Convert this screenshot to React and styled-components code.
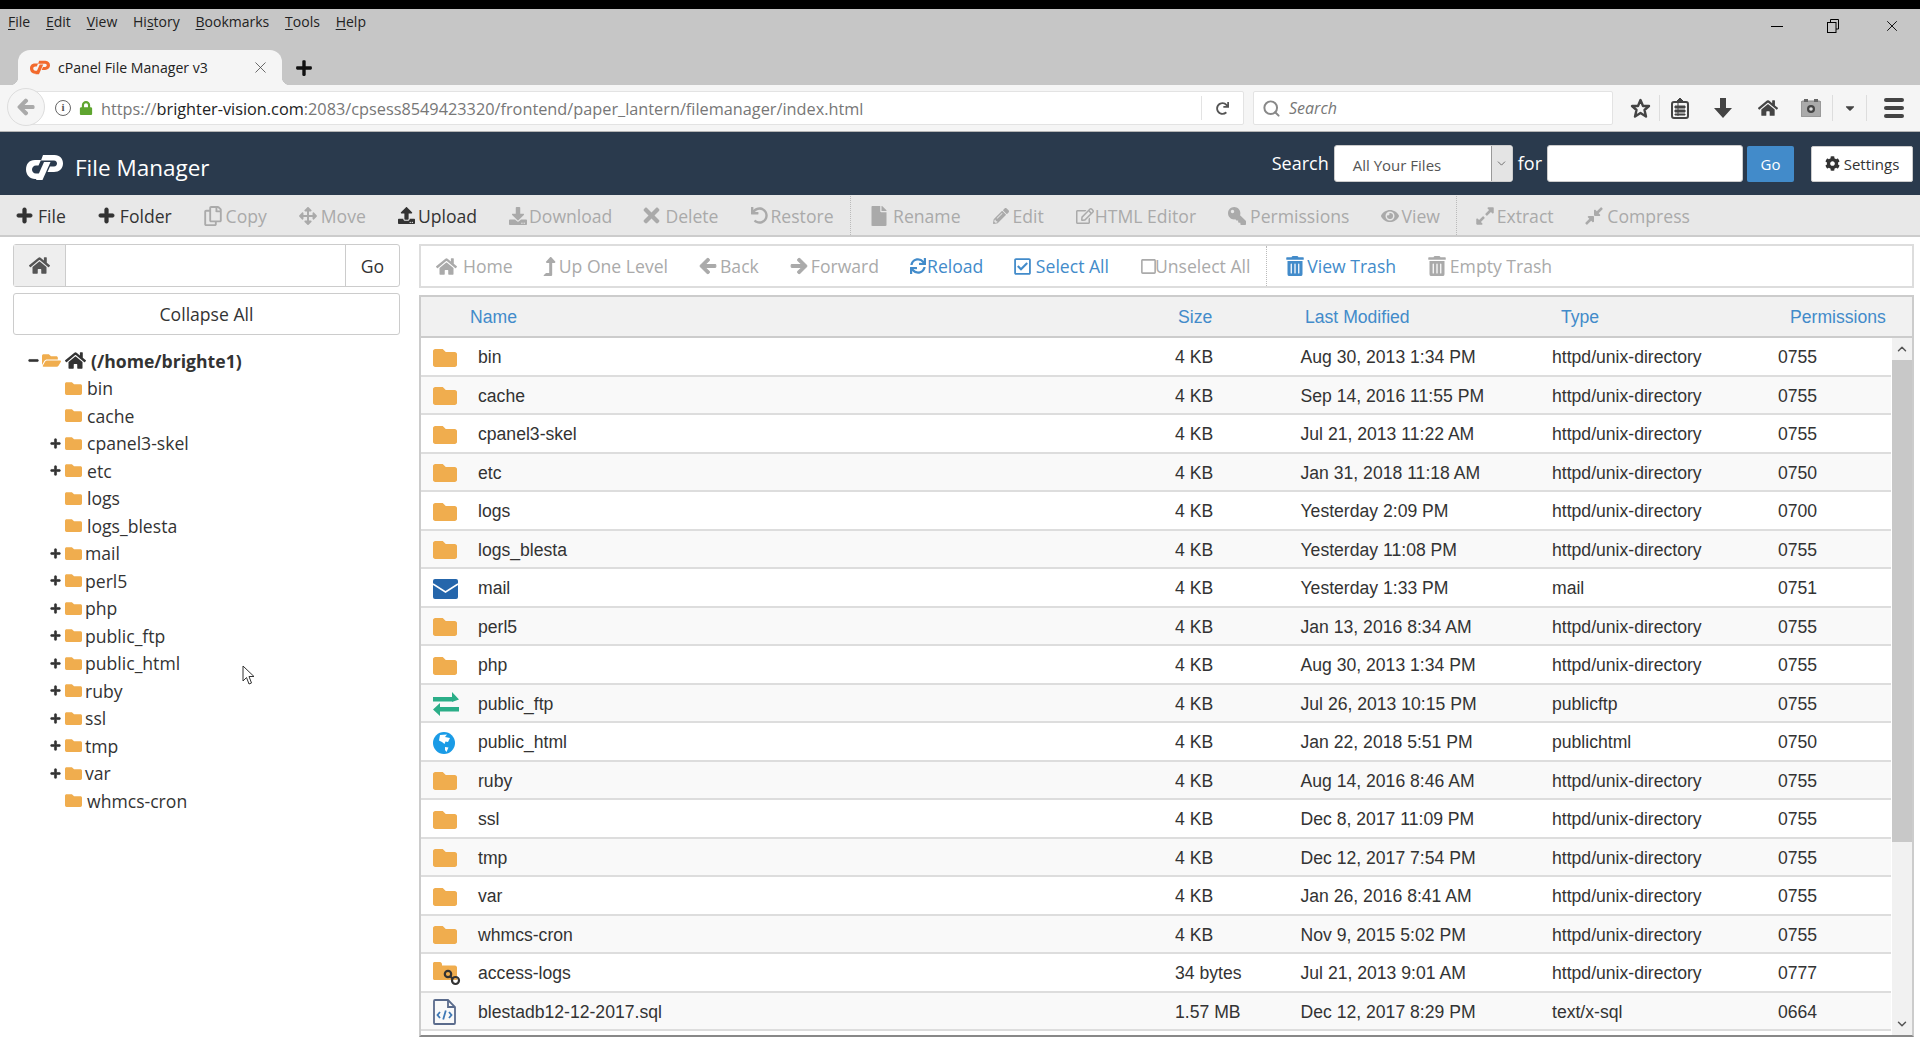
import styled, { createGlobalStyle } from "styled-components";
import {
  FaPlus, FaRegCopy, FaArrowsAlt, FaUpload, FaDownload, FaTimes, FaUndo, FaFile, FaPencilAlt,
  FaRegEdit, FaKey, FaEye, FaExpandAlt, FaCompressAlt, FaHome, FaLevelUpAlt, FaArrowLeft,
  FaArrowRight, FaSync, FaRegCheckSquare, FaRegSquare, FaTrashAlt, FaCog, FaFolder, FaFolderOpen,
  FaMinus, FaLock, FaRedo, FaCaretDown,
} from "react-icons/fa";
import { Search as SearchIcon, ChevronDown, ChevronUp, X } from "lucide-react";

const Global = createGlobalStyle`
html,body{margin:0;padding:0;background:#fff;}
#root{height:1039px;overflow:hidden;}
*{box-sizing:border-box;}
`;

const Page = styled.div`
position:relative;
width:1920px;
height:1039px;
display:flex;
flex-direction:column;
font-family:"Open Sans",sans-serif;
color:#333;
background:#fff;
overflow:hidden;
border-top:9px solid #000;
`;

/* browser chrome */
const MenuStrip = styled.div`
height:76px;
background:#c6c6c6;
position:relative;
flex:none;
`;
const MenuBar = styled.div`
display:flex;
gap:15.800px;
padding:3px 0 0 8px;
font-size:14px;
line-height:20px;
color:#222;
u{text-underline-offset:2px;}
`;
const WinButtons = styled.div`
position:absolute;
top:5px;
right:19px;
display:flex;
align-items:center;
gap:44px;
height:24px;
`;
const MinBtn = styled.span`
width:12px;
height:1px;
background:#000;
`;
const TabRow = styled.div`
display:flex;
align-items:center;
position:absolute;
left:18px;
bottom:0;
`;
const Tab = styled.div`
position:relative;
width:264px;
height:35px;
background:#f5f5f5;
border-radius:12px 12px 0 0;
display:flex;
align-items:center;
padding:0 12px 0 12px;
font-size:14.100px;
color:#222;
&::before,&::after{
    content:"";
    position:absolute;
    bottom:0;
    width:8px;
    height:8px;
}
&::before{
    left:-8px;
    background:radial-gradient(circle at 0 0,transparent 8px,#f5f5f5 8.500px);
}
&::after{
    right:-8px;
    background:radial-gradient(circle at 100% 0,transparent 8px,#f5f5f5 8.500px);
}
`;
const TabTitle = styled.span`
margin-left:8px;
flex:1;
`;
const NewTab = styled.span`
margin-left:13px;
display:flex;
color:#111;
`;
const NavBar = styled.div`
height:47px;
flex:none;
background:#f5f5f5;
border-bottom:1px solid #b5b5b5;
display:flex;
align-items:center;
position:relative;
padding-left:30px;
`;
const BackCircle = styled.div`
position:absolute;
left:7px;
top:3px;
width:38px;
height:38px;
border-radius:50%;
background:#f5f5f5;
border:1px solid #ddd;
color:#aaa;
display:flex;
align-items:center;
justify-content:center;
z-index:1;
`;
const UrlBox = styled.div`
width:1214px;
height:34px;
background:#fff;
border:1px solid #e3e3e3;
border-radius:2px;
display:flex;
align-items:center;
padding-left:24px;
font-size:16.300px;
color:#777;
white-space:nowrap;
b{font-weight:400;color:#222;}
`;
const InfoMark = styled.span`
width:16px;
height:16px;
border:1.500px solid #666;
border-radius:50%;
font-size:11px;
line-height:13px;
font-family:"Liberation Serif",serif;
font-weight:700;
text-align:center;
color:#555;
flex:none;
`;
const LockMark = styled.span`
margin:0 8px 0 8px;
color:#5ea52f;
display:flex;
`;
const UrlText = styled.span`
flex:1;
position:relative;
top:1px;
`;
const UrlEnd = styled.span`
width:42px;
height:24px;
border-left:1px solid #e3e3e3;
color:#555;
display:flex;
align-items:center;
justify-content:center;
`;
const SearchBox = styled.div`
margin-left:9px;
width:360px;
height:34px;
background:#fff;
border:1px solid #e3e3e3;
border-radius:2px;
display:flex;
align-items:center;
gap:8px;
padding-left:8px;
font-size:16px;
font-style:italic;
color:#777;
`;
const NavIcons = styled.div`
display:flex;
align-items:center;
margin-left:8px;
color:#444;
height:30px;
`;
const NavIcon = styled.span`
display:flex;
align-items:center;
justify-content:center;
width:${(p) => p.$w || 44}px;
`;
const NavSep = styled.span`
width:1px;
height:26px;
background:#ddd;
`;
const Burger = styled.span`
display:flex;
flex-direction:column;
gap:4px;
margin-left:17px;
span{
    display:block;
    width:20px;
    height:4px;
    border-radius:2px;
    background:#444;
}
`;

/* cpanel header */
const Header = styled.div`
height:63px;
flex:none;
background:#2a3a4d;
display:flex;
align-items:center;
padding:0 7px 0 26px;
color:#fff;
`;
const Brand = styled.div`
flex:1;
display:flex;
align-items:center;
padding-top:8px;
`;
const Title = styled.span`
margin-left:12px;
font-size:22.500px;
`;
const HeadLabel = styled.span`
font-size:18px;
margin:0 5px;
position:relative;
top:-1px;
`;
const SelectBox = styled.div`
width:179px;
height:37px;
background:#fff;
border:1px solid #ccc;
border-radius:3px;
display:flex;
align-items:center;
justify-content:space-between;
padding-left:18px;
font-size:15px;
color:#555;
overflow:hidden;
`;
const SelectText = styled.span`
padding-top:2px;
`;
const SelectArrow = styled.span`
width:21px;
height:100%;
background:#e4e4e4;
border-left:1px solid #999;
color:#555;
display:flex;
align-items:center;
justify-content:center;
`;
const HeadInput = styled.div`
width:196px;
height:37px;
background:#fff;
border:1px solid #ccc;
border-radius:3px;
`;
const GoBtn = styled.div`
margin-left:4px;
width:47px;
height:36px;
background:#428bca;
border-radius:2px;
font-size:15px;
display:flex;
align-items:center;
justify-content:center;
`;
const SettingsBtn = styled.div`
margin-left:17px;
width:102px;
height:36px;
background:#fff;
border:1px solid #ccc;
border-radius:2px;
color:#333;
font-size:15px;
display:flex;
align-items:center;
justify-content:center;
gap:4px;
`;

/* toolbars */
const Actions = styled.div`
height:42px;
flex:none;
background:#e8e8e8;
border-bottom:2px solid #ccc;
display:flex;
align-items:center;
gap:32px;
padding:1px 0 0 16px;
font-size:17.600px;
`;
const Tool = styled.span`
display:flex;
align-items:center;
gap:${(p) => p.$gap ?? 4}px;
white-space:nowrap;
color:${(p) => (p.$tone === "on" ? "#333" : p.$tone === "blue" ? "#428bca" : "#aaa")};
`;
const Glyph = styled.span`
display:flex;
margin:0 ${(p) => -(p.$tail || 0)}px 0 ${(p) => -(p.$trim || 0)}px;
`;
const MirrorKey = styled(FaKey)`
transform:scaleX(-1);
`;
const Divider = styled.span`
width:1px;
align-self:stretch;
margin:0 ${(p) => p.$after}px 0 -16px;
border-left:1px dotted #bbb;
`;

const Main = styled.div`
flex:1;
display:flex;
gap:19px;
padding:7px 6px 0 13px;
min-height:0;
`;

/* left column */
const Side = styled.div`
width:387px;
flex:none;
display:flex;
flex-direction:column;
gap:6px;
`;
const PathGroup = styled.div`
height:43px;
display:flex;
border:1px solid #ccc;
border-radius:3px;
font-size:17.600px;
`;
const PathHome = styled.span`
width:52px;
background:#eee;
border-right:1px solid #ccc;
color:#555;
display:flex;
align-items:center;
justify-content:center;
`;
const PathInput = styled.span`
flex:1;
`;
const PathGo = styled.span`
width:54px;
border-left:1px solid #ccc;
display:flex;
align-items:center;
justify-content:center;
`;
const Collapse = styled.div`
height:42px;
border:1px solid #ccc;
border-radius:3px;
font-size:17.600px;
display:flex;
align-items:center;
justify-content:center;
`;
const Tree = styled.div`
padding-top:6px;
font-size:17.600px;
`;
const TreeRow = styled.div`
height:27.500px;
display:flex;
align-items:center;
position:relative;
padding-left:${(p) => (p.$root ? 15 : 52)}px;
font-weight:${(p) => (p.$root ? 700 : 400)};
`;
const Toggle = styled.span`
position:absolute;
left:37px;
display:flex;
color:#333;
`;
const MinusMark = styled.span`
display:flex;
margin-right:3px;
`;
const TreeFolder = styled.span`
display:flex;
color:#f0ad4e;
margin-right:${(p) => (p.$tight ? 3 : 5)}px;
`;
const TreeHome = styled.span`
display:flex;
margin:0 5px 0 1px;
color:#333;
`;

/* table */
const Content = styled.div`
flex:1;
display:flex;
flex-direction:column;
gap:7px;
min-width:0;
`;
const NavTools = styled.div`
height:44px;
flex:none;
border:2px solid #ddd;
display:flex;
align-items:center;
gap:32px;
padding-left:15px;
font-size:17.600px;
`;
const Table = styled.div`
height:742px;
flex:none;
border:2px solid #ccc;
border-bottom-color:#888;
display:flex;
flex-direction:column;
font-family:"Liberation Sans",Arial,sans-serif;
font-size:17.600px;
`;
const HeadRow = styled.div`
height:41px;
flex:none;
background:#f1f1f1;
border-bottom:2px solid #ccc;
display:grid;
grid-template-columns:708px 127px 256px 229px 1fr;
align-items:center;
padding:2px 0 0 49px;
color:#428bca;
`;
const Body = styled.div`
flex:1;
display:flex;
min-height:0;
`;
const Rows = styled.div`
flex:1;
`;
const Row = styled.div`
height:38.500px;
display:grid;
grid-template-columns:57px 697px 125.500px 251.500px 226px 1fr;
align-items:center;
padding-top:3px;
background:${(p) => (p.$odd ? "#f9f9f9" : "#fff")};
border-bottom:2px solid #ddd;
`;
const Cell = styled.span`
white-space:nowrap;
`;
const IconCell = styled.span`
display:flex;
align-items:center;
padding-left:12px;
color:#f0ad4e;
`;
const Scrollbar = styled.div`
width:20px;
margin-left:1px;
flex:none;
background:#f1f1f1;
display:flex;
flex-direction:column;
align-items:center;
justify-content:space-between;
color:#555;
`;
const ScrollEnd = styled.span`
height:22px;
display:flex;
align-items:center;
justify-content:center;
`;
const Thumb = styled.span`
width:100%;
height:482px;
background:#c8c8c8;
margin-bottom:auto;
`;
const Pointer = styled.svg`
position:absolute;
left:242px;
top:656px;
`;

const CpLogo = ({ w = 37, h = 25, fill = "#fff" }) => (
  <svg width={w} height={h} viewBox="0 0 37 25" fill={fill}>
    <path d="M15 5H9C3 5 0 9 0 14.500C0 20 4 24 9 24H12.500L15 18.500H10C7.500 18.500 6 16.800 6 14.500C6 12.200 7.800 10.500 10 10.500H12.500Z" />
    <path d="M17 0H28.500C34 0 37 4 37 8.500C37 13.500 33 17 28 17H21.500L24 11.500H28C30 11.500 31 10 31 8.500C31 7 30 5.500 28 5.500H15Z" />
    <path d="M18 7H24.500L16.500 25H10Z" />
  </svg>
);

const TransferIcon = () => (
  <svg width="26" height="24" viewBox="0 0 26 24" fill="#2bae88">
    <path d="M0 5H19V0L26 7.500L19 10V9.500H0ZM26 15H7V11L0 17.500L7 24V19.500H26Z" />
  </svg>
);
const MailIcon = () => (
  <svg width="25" height="20" viewBox="0 0 25 20">
    <rect width="25" height="20" rx="2" fill="#2566ab" />
    <path d="M0 5L12.500 13L25 5" fill="none" stroke="#fff" strokeWidth="1.500" />
  </svg>
);
const GlobeIcon = () => (
  <svg width="22" height="22" viewBox="0 0 22 22">
    <circle cx="11" cy="11" r="11" fill="#1a9be6" />
    <path d="M7 3L14 2.500L12 5L17 6L15 10L12.500 9.500L11.500 12L9 10L6 8.500Z" fill="#fff" />
    <path d="M12 15L15.500 15.500L13.500 20L12 18Z" fill="#fff" />
  </svg>
);
const LinkFolderIcon = () => (
  <svg width="28" height="24" viewBox="0 0 28 24">
    <path d="M1.500 0H7C8 0 9 1 9 2.500V3.500H22C23 3.500 24 4.500 24 5.500V18H1.500C.7 18 0 17.300 0 16.500V1.500C0 .7 .7 0 1.500 0Z" fill="#f0ad4e" />
    <g fill="none" stroke="#333" strokeWidth="2.200">
      <circle cx="15" cy="12" r="3.200" />
      <circle cx="22.500" cy="18.500" r="3.500" />
      <path d="M17 14L20 17" />
    </g>
  </svg>
);
const SqlIcon = () => (
  <svg width="23" height="26" viewBox="0 0 23 26" fill="none" stroke="#5a6b8c" strokeWidth="1.800">
    <path d="M1 2Q1 1 2 1H15L22 8V24Q22 25 21 25H2Q1 25 1 24Z" />
    <path d="M15 1V8H22" />
    <path d="M7 13L4.500 16L7 19M16 13L18.500 16L16 19M12.800 11.500L10.200 20.500" stroke="#3f78b5" />
  </svg>
);

const bold = { stroke: "currentColor", strokeWidth: 30 };

const leftTools = [
  { Icon: FaPlus, label: "File", tone: "on", gap: 5, size: 17, extra: bold },
  { Icon: FaPlus, label: "Folder", tone: "on", gap: 5, size: 17, extra: bold },
  { Icon: FaRegCopy, label: "Copy", size: 20, trim: 1.250, gap: 3 },
  { Icon: FaArrowsAlt, label: "Move", size: 18 },
  { Icon: FaUpload, label: "Upload", tone: "on", size: 17, gap: 3 },
  { Icon: FaDownload, label: "Download", size: 18, gap: 2 },
  { Icon: FaTimes, label: "Delete", size: 23, trim: 4, gap: 2 },
  { Icon: FaUndo, label: "Restore", size: 17, gap: 3 },
  { after: -11 },
  { Icon: FaFile, label: "Rename", size: 20, trim: 2.500 },
  { Icon: FaPencilAlt, label: "Edit", size: 16 },
  { Icon: FaRegEdit, label: "HTML Editor", size: 18, gap: 1 },
  { Icon: MirrorKey, label: "Permissions", size: 18 },
  { Icon: FaEye, label: "View", size: 18, gap: 2 },
  { after: -13 },
  { Icon: FaExpandAlt, label: "Extract", size: 20, trim: 1.250, gap: 2 },
  { Icon: FaCompressAlt, label: "Compress", size: 20, trim: 1.250, gap: 3 },
];

const navTools = [
  { Icon: FaHome, label: "Home", size: 21, gap: 6 },
  { Icon: FaLevelUpAlt, label: "Up One Level", size: 19, trim: 5, gap: 0 },
  { Icon: FaArrowLeft, label: "Back", size: 18, trim: 1, gap: 3, extra: bold },
  { Icon: FaArrowRight, label: "Forward", size: 18, trim: 1, gap: 3, extra: bold },
  { Icon: FaSync, label: "Reload", tone: "blue", size: 16, trim: 1, gap: 1 },
  { Icon: FaRegCheckSquare, label: "Select All", tone: "blue", size: 19, trim: 2.500 },
  { Icon: FaRegSquare, label: "Unselect All", size: 17, trim: 1, tail: 2, gap: 0 },
  { after: -13 },
  { Icon: FaTrashAlt, label: "View Trash", tone: "blue", size: 20, trim: 1.250, gap: 2 },
  { Icon: FaTrashAlt, label: "Empty Trash", size: 20, trim: 1.250, gap: 3 },
];

const tree = [
  ["bin", false],
  ["cache", false],
  ["cpanel3-skel", true],
  ["etc", true],
  ["logs", false],
  ["logs_blesta", false],
  ["mail", true, true],
  ["perl5", true, true],
  ["php", true, true],
  ["public_ftp", true, true],
  ["public_html", true, true],
  ["ruby", true, true],
  ["ssl", true, true],
  ["tmp", true, true],
  ["var", true, true],
  ["whmcs-cron", false],
];

const dir = "httpd/unix-directory";
const files = [
  ["bin", "4 KB", "Aug 30, 2013 1:34 PM", dir, "0755"],
  ["cache", "4 KB", "Sep 14, 2016 11:55 PM", dir, "0755"],
  ["cpanel3-skel", "4 KB", "Jul 21, 2013 11:22 AM", dir, "0755"],
  ["etc", "4 KB", "Jan 31, 2018 11:18 AM", dir, "0750"],
  ["logs", "4 KB", "Yesterday 2:09 PM", dir, "0700"],
  ["logs_blesta", "4 KB", "Yesterday 11:08 PM", dir, "0755"],
  ["mail", "4 KB", "Yesterday 1:33 PM", "mail", "0751", <MailIcon />],
  ["perl5", "4 KB", "Jan 13, 2016 8:34 AM", dir, "0755"],
  ["php", "4 KB", "Aug 30, 2013 1:34 PM", dir, "0755"],
  ["public_ftp", "4 KB", "Jul 26, 2013 10:15 PM", "publicftp", "0755", <TransferIcon />],
  ["public_html", "4 KB", "Jan 22, 2018 5:51 PM", "publichtml", "0750", <GlobeIcon />],
  ["ruby", "4 KB", "Aug 14, 2016 8:46 AM", dir, "0755"],
  ["ssl", "4 KB", "Dec 8, 2017 11:09 PM", dir, "0755"],
  ["tmp", "4 KB", "Dec 12, 2017 7:54 PM", dir, "0755"],
  ["var", "4 KB", "Jan 26, 2016 8:41 AM", dir, "0755"],
  ["whmcs-cron", "4 KB", "Nov 9, 2015 5:02 PM", dir, "0755"],
  ["access-logs", "34 bytes", "Jul 21, 2013 9:01 AM", dir, "0777", <LinkFolderIcon />],
  ["blestadb12-12-2017.sql", "1.57 MB", "Dec 12, 2017 8:29 PM", "text/x-sql", "0664", <SqlIcon />],
];

const toolList = (list) =>
  list.map((t, i) => {
    if (!t.Icon) return <Divider key={i} $after={t.after} />;
    const { Icon, label, tone, gap, size, trim, tail, extra } = t;
    return (
      <Tool key={i} $tone={tone} $gap={gap}>
        <Glyph $trim={trim} $tail={tail}><Icon size={size} {...extra} /></Glyph>
        {label}
      </Tool>
    );
  });

const App = () => {
  return (
    <Page>
      <Global />
      <MenuStrip>
        <MenuBar>
          <span><u>F</u>ile</span>
          <span><u>E</u>dit</span>
          <span><u>V</u>iew</span>
          <span>Hi<u>s</u>tory</span>
          <span><u>B</u>ookmarks</span>
          <span><u>T</u>ools</span>
          <span><u>H</u>elp</span>
        </MenuBar>
        <WinButtons>
          <MinBtn />
          <svg width="12" height="14" viewBox="0 0 12 14" fill="none" stroke="#000">
            <path d="M3.500 3V.5H11.500V10H9" />
            <rect x=".5" y="3.500" width="8.500" height="10" />
          </svg>
          <X size={18} strokeWidth={1.200} color="#000" />
        </WinButtons>
        <TabRow>
          <Tab>
            <CpLogo w={20} h={15} fill="#f26a2d" />
            <TabTitle>cPanel File Manager v3</TabTitle>
            <X size={19} strokeWidth={1} color="#444" />
          </Tab>
          <NewTab><FaPlus size={18} /></NewTab>
        </TabRow>
      </MenuStrip>
      <NavBar>
        <BackCircle><FaArrowLeft size={18} stroke="currentColor" strokeWidth={40} /></BackCircle>
        <UrlBox>
          <InfoMark>i</InfoMark>
          <LockMark><FaLock size={14} /></LockMark>
          <UrlText>https://<b>brighter-vision.com</b>:2083/cpsess8549423320/frontend/paper_lantern/filemanager/index.html</UrlText>
          <UrlEnd><FaRedo size={13} /></UrlEnd>
        </UrlBox>
        <SearchBox>
          <SearchIcon size={19} color="#888" strokeWidth={2.500} />
          Search
        </SearchBox>
        <NavIcons>
          <NavIcon $w={38}>
            <svg width="21" height="21" viewBox="0 0 21 21" fill="none" stroke="#444" strokeWidth="2.400" strokeLinejoin="round">
              <path d="M10.500 2L13 8H19L14.500 12L16 18.500L10.500 15L5 18.500L6.500 12L2 8H8Z" />
            </svg>
          </NavIcon>
          <NavSep />
          <NavIcon $w={40}>
            <svg width="18" height="21" viewBox="0 0 18 21">
              <rect x="1" y="4" width="16" height="16" rx="2" fill="none" stroke="#444" strokeWidth="2" />
              <path d="M9 0L13 4H5ZM4 8H14V10H4ZM4 12H14V14H4ZM4 16H14V17H4ZM7 5V18" stroke="#444" fill="#444" strokeWidth="1" />
            </svg>
          </NavIcon>
          <NavIcon $w={46}>
            <svg width="18" height="20" viewBox="0 0 18 20" fill="#444">
              <path d="M6 0H12V10H18L9 20L0 10H6Z" />
            </svg>
          </NavIcon>
          <NavIcon $w={44}><FaHome size={20} /></NavIcon>
          <NavIcon $w={42}>
            <svg width="20" height="18" viewBox="0 0 20 18">
              <rect y="2" width="20" height="16" rx="2" fill="#aaa" stroke="#888" />
              <rect x="3" width="4" height="3" fill="#666" />
              <rect x="13" width="4" height="3" fill="#666" />
              <circle cx="10" cy="10" r="4" fill="#444" />
              <circle cx="10" cy="10" r="1.800" fill="#ddd" />
            </svg>
          </NavIcon>
          <NavSep />
          <NavIcon $w={33}><FaCaretDown size={14} /></NavIcon>
          <NavSep />
          <Burger><span /><span /><span /></Burger>
        </NavIcons>
      </NavBar>
      <Header>
        <Brand>
          <CpLogo />
          <Title>File Manager</Title>
        </Brand>
        <HeadLabel>Search</HeadLabel>
        <SelectBox>
          <SelectText>All Your Files</SelectText>
          <SelectArrow><ChevronDown size={13} strokeWidth={1.500} /></SelectArrow>
        </SelectBox>
        <HeadLabel>for</HeadLabel>
        <HeadInput />
        <GoBtn>Go</GoBtn>
        <SettingsBtn><FaCog size={15} />Settings</SettingsBtn>
      </Header>
      <Actions>{toolList(leftTools)}</Actions>
      <Main>
        <Side>
          <PathGroup>
            <PathHome><FaHome size={21} /></PathHome>
            <PathInput />
            <PathGo>Go</PathGo>
          </PathGroup>
          <Collapse>Collapse All</Collapse>
          <Tree>
            <TreeRow $root>
              <MinusMark><FaMinus size={11} {...bold} /></MinusMark>
              <TreeFolder $tight><FaFolderOpen size={19} /></TreeFolder>
              <TreeHome><FaHome size={21} /></TreeHome>
              (/home/brighte1)
            </TreeRow>
            {tree.map(([name, open, tight]) => (
              <TreeRow key={name}>
                {open && <Toggle><FaPlus size={11} {...bold} /></Toggle>}
                <TreeFolder $tight={tight}><FaFolder size={17} /></TreeFolder>
                {name}
              </TreeRow>
            ))}
          </Tree>
        </Side>
        <Content>
          <NavTools>{toolList(navTools)}</NavTools>
          <Table>
            <HeadRow>
              <span>Name</span>
              <span>Size</span>
              <span>Last Modified</span>
              <span>Type</span>
              <span>Permissions</span>
            </HeadRow>
            <Body>
              <Rows>
                {files.map((f, i) => (
                  <Row key={f[0]} $odd={i % 2 === 1}>
                    <IconCell>{f[5] || <FaFolder size={24} />}</IconCell>
                    <Cell>{f[0]}</Cell>
                    <Cell>{f[1]}</Cell>
                    <Cell>{f[2]}</Cell>
                    <Cell>{f[3]}</Cell>
                    <Cell>{f[4]}</Cell>
                  </Row>
                ))}
              </Rows>
              <Scrollbar>
                <ScrollEnd><ChevronUp size={14} strokeWidth={2.500} /></ScrollEnd>
                <Thumb />
                <ScrollEnd><ChevronDown size={14} strokeWidth={2.500} /></ScrollEnd>
              </Scrollbar>
            </Body>
          </Table>
        </Content>
      </Main>
      <Pointer width="14" height="21" viewBox="0 0 14 21" fill="#fff" stroke="#333">
        <path d="M1 1V16L4.500 12.500L7 19L9.500 18L7 11.500H12Z" />
      </Pointer>
    </Page>
  );
};

export default App;
